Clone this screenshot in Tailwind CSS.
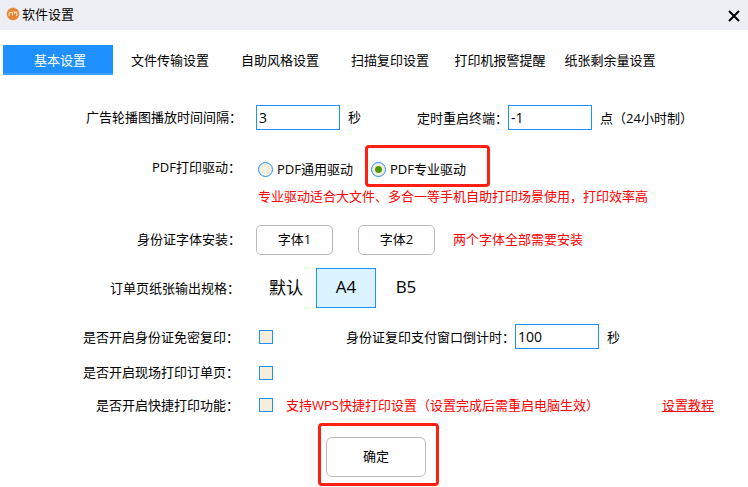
<!DOCTYPE html>
<html lang="zh-CN">
<head>
    <meta charset="UTF-8">
    <meta name="viewport" content="width=device-width, initial-scale=1.0">
    <title>软件设置</title>
    <script src="https://cdn.jsdelivr.net/npm/@tailwindcss/browser@4"></script>
</head>
<body class="min-h-screen bg-white text-black text-[13px] leading-5 font-['Open_Sans','Noto_Sans_CJK_SC',sans-serif]">
    <!-- Title bar -->
    <header class="flex items-center justify-between h-[30px] pl-1.5 pr-1.5 pb-0.5 bg-[#eeeff4]">
        <div class="flex items-center gap-0.5">
            <svg class="w-3.5 h-3.5" viewBox="0 0 14 14" fill="none">
                <circle cx="7" cy="7" r="6.2" fill="#e38533"/>
                <circle cx="7" cy="7" r="6.2" stroke="#f0b17c" stroke-dasharray="1.5 1.5"/>
                <path d="M3.2 8.8V7.2a1.6 1.6 0 0 1 3.2-.6v1.8M7.6 5h2.2a1.3 1.3 0 0 1 1 1.6V9M8.6 5v2" stroke="#fbe6d3" stroke-width="1.1"/>
            </svg>
            <h1>软件设置</h1>
        </div>
        <button type="button" aria-label="关闭" class="p-0.5 pt-1.5">
            <svg class="w-3 h-3" viewBox="0 0 12 12" fill="none" stroke="#000" stroke-width="2">
                <path d="M1 1l10 10M11 1L1 11"/>
            </svg>
        </button>
    </header>

    <!-- Tabs -->
    <nav class="flex mt-[15px] pl-[3px] h-[30px]">
        <button type="button" class="w-[110px] mr-0.5 pl-1 pt-0.5 bg-[#1e90ff] border-b-2 border-[#3f9fff] text-white">基本设置</button>
        <button type="button" class="w-[110px]">文件传输设置</button>
        <button type="button" class="w-[110px]">自助风格设置</button>
        <button type="button" class="w-[110px]">扫描复印设置</button>
        <button type="button" class="w-[110px]">打印机报警提醒</button>
        <button type="button" class="w-[110px]">纸张剩余量设置</button>
    </nav>

    <!-- Settings -->
    <form class="pt-[30px] pb-2.5">
        <div class="flex items-center">
            <label for="interval" class="w-[242px] pb-0.5 text-right">广告轮播图播放时间间隔：</label>
            <input id="interval" type="text" value="3" class="ml-3.5 w-[84px] h-[25px] px-0.5 border border-[#1e90ff] text-sm">
            <span class="ml-2 pb-0.5">秒</span>
            <label for="restart" class="ml-14">定时重启终端：</label>
            <input id="restart" type="text" value="-1" class="w-[84px] h-[25px] px-0.5 border border-[#1e90ff] text-sm">
            <span class="ml-2">点（24小时制）</span>
        </div>

        <div class="flex items-center mt-[29px]" role="radiogroup" aria-labelledby="driver">
            <span id="driver" class="w-[241px] -mt-1 text-right">PDF打印驱动：</span>
            <label class="ml-[17px] flex items-center gap-1">
                <input type="radio" name="driver" class="appearance-none w-[15px] h-[15px] rounded-full border border-[#1e90ff] bg-[#f5eedd]">
                PDF通用驱动
            </label>
            <label class="relative ml-[18px] flex items-center gap-1">
                <input type="radio" name="driver" checked class="appearance-none w-[15px] h-[15px] rounded-full border border-[#1e90ff] bg-[#f5eedd] bg-[radial-gradient(circle,#4f9a00_3px,transparent_4px)]">
                PDF专业驱动
                <span class="absolute -left-1.5 -right-6 -top-3.5 -bottom-2 border-3 border-[#ff2014] rounded-sm pointer-events-none"></span>
            </label>
        </div>
        <p class="mt-[7px] pl-[258px] text-[#ff0000]">专业驱动适合大文件、多合一等手机自助打印场景使用，打印效率高</p>

        <div class="flex items-center mt-[19px]">
            <span class="w-[241px] pb-0.5 text-right">身份证字体安装：</span>
            <button type="button" class="ml-[15px] w-[77px] h-[30px] pb-0.5 border border-[#bababa] rounded-[5px]">字体1</button>
            <button type="button" class="ml-[25px] w-[77px] h-[30px] pb-0.5 border border-[#bababa] rounded-[5px]">字体2</button>
            <span class="ml-[18px] pb-0.5 text-[#ff0000]">两个字体全部需要安装</span>
        </div>

        <div class="flex items-center mt-[13px]">
            <span class="w-60 text-right">订单页纸张输出规格：</span>
            <button type="button" class="ml-4 w-[60px] h-10 text-[17px]">默认</button>
            <button type="button" class="w-[60px] h-10 pb-0.5 border border-[#1e90ff] bg-[#dbf3ff] text-[17px]">A4</button>
            <button type="button" class="w-[60px] h-10 pb-0.5 text-[17px]">B5</button>
        </div>

        <div class="flex items-center mt-4">
            <label for="copy" class="w-[239px] text-right">是否开启身份证免密复印：</label>
            <input id="copy" type="checkbox" class="ml-5 appearance-none w-3.5 h-3.5 border border-[#1e90ff] bg-[#f5eedd]">
            <label for="countdown" class="ml-[73px]">身份证复印支付窗口倒计时：</label>
            <input id="countdown" type="text" value="100" class="w-[84px] h-[25px] px-0.5 border border-[#1e90ff] text-sm">
            <span class="ml-2">秒</span>
        </div>

        <div class="flex items-center mt-[13px]">
            <label for="order" class="w-[239px] pb-0.5 text-right">是否开启现场打印订单页：</label>
            <input id="order" type="checkbox" class="ml-5 appearance-none w-3.5 h-3.5 border border-[#1e90ff] bg-[#f5eedd]">
        </div>

        <div class="flex items-center mt-[11px]">
            <label for="quick" class="w-[239px] text-right">是否开启快捷打印功能：</label>
            <input id="quick" type="checkbox" class="ml-5 appearance-none w-3.5 h-3.5 border border-[#1e90ff] bg-[#f5eedd]">
            <span class="ml-[13px] w-[376px] text-[#ff0000]">支持WPS快捷打印设置（设置完成后需重启电脑生效）</span>
            <a href="#" class="text-[#ff0000] underline">设置教程</a>
        </div>

        <div class="flex mt-[22px] pl-[326px]">
            <div class="relative">
                <button type="submit" class="block w-[100px] h-10 pb-0.5 border border-[#bababa] rounded-md">确定</button>
                <span class="absolute -left-2 -right-[13px] -top-3.5 -bottom-[9px] border-3 border-[#ff2014] rounded-sm pointer-events-none"></span>
            </div>
        </div>
    </form>
</body>
</html>
